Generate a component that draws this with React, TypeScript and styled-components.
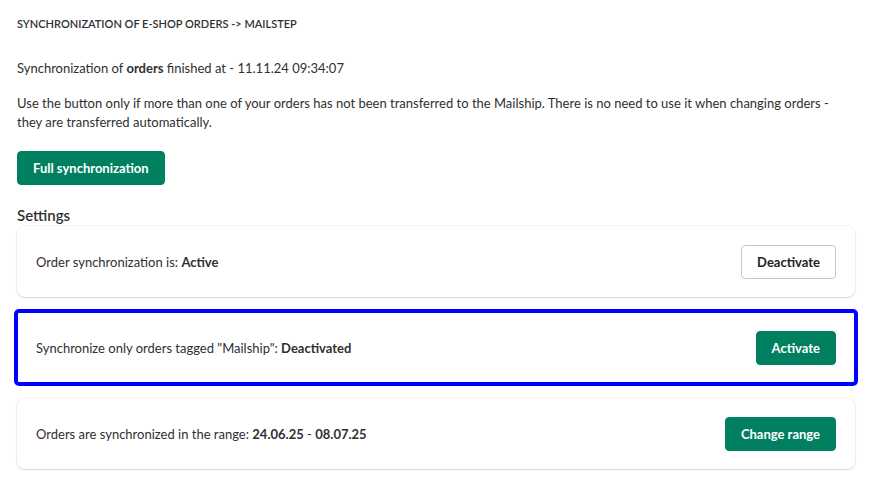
import React from "react";
import styled, {createGlobalStyle} from "styled-components";

const GlobalStyle = createGlobalStyle`
    body {
        margin: 0;
        background: #ffffff;
        color: #303030;
        font-family: Lato, "Open Sans", sans-serif;
        font-size: 13px;
    }
`;

const StyledPage = styled.main`
    display: flex;
    flex-direction: column;
    padding: 16px 15px 12px 17px;
`;

const StyledTitle = styled.h1`
    font-size: 11px;
    font-weight: 600;
    line-height: 16px;
    margin: 0 0 27px;
    text-transform: uppercase;
`;

const StyledText = styled.p`
    line-height: 19px;
    margin: 0 0 16px;

    &:last-of-type {
        margin-bottom: 19px;
    }
`;

const StyledHeading = styled.h2`
    font-size: 15px;
    font-weight: 600;
    line-height: 20px;
    margin: 0 0 1px;
`;

const StyledCards = styled.div`
    display: flex;
    flex-direction: column;
    gap: 15px;
`;

const StyledCard = styled.section<{$highlight?: boolean}>`
    align-items: center;
    background: #ffffff;
    border-radius: ${(p) => (p.$highlight ? "2px" : "8px")};
    box-shadow: 0 1px 2px rgba(0, 0, 0, 0.14), 0 0 0 1px rgba(0, 0, 0, 0.04);
    box-sizing: border-box;
    display: flex;
    height: 71px;
    justify-content: space-between;
    outline: ${(p) => (p.$highlight ? "4px solid #0000ff" : "none")};
    outline-offset: -1px;
    padding: 0 19px;
`;

const StyledButton = styled.button<{$secondary?: boolean}>`
    background: ${(p) => (p.$secondary ? "#ffffff" : "#008060")};
    border: 1px solid ${(p) => (p.$secondary ? "#c4c7ca" : "#008060")};
    border-radius: 4px;
    color: ${(p) => (p.$secondary ? "#202223" : "#ffffff")};
    cursor: pointer;
    font-family: inherit;
    font-size: 13px;
    font-weight: 700;
    height: 34px;
    padding: 0 15px;
`;

const StyledTopButton = styled(StyledButton)`
    align-self: flex-start;
    margin-bottom: 20px;
`;

const settings = [
    {
        label: "Order synchronization is: ",
        value: <b>Active</b>,
        action: "Deactivate",
        secondary: true,
    },
    {
        label: "Synchronize only orders tagged \"Mailship\": ",
        value: <b>Deactivated</b>,
        action: "Activate",
        highlight: true,
    },
    {
        label: "Orders are synchronized in the range: ",
        value: (
            <>
                <b>24.06.25</b> - <b>08.07.25</b>
            </>
        ),
        action: "Change range",
    },
];

export default function App() {
    return (
        <StyledPage>
            <GlobalStyle />
            <StyledTitle>Synchronization of e-shop orders -&gt; Mailstep</StyledTitle>
            <StyledText>
                Synchronization of <b>orders</b> finished at - 11.11.24 09:34:07
            </StyledText>
            <StyledText>
                Use the button only if more than one of your orders has not been transferred to the
                Mailship. There is no need to use it when changing orders - they are transferred
                automatically.
            </StyledText>
            <StyledTopButton>Full synchronization</StyledTopButton>
            <StyledHeading>Settings</StyledHeading>
            <StyledCards>
                {settings.map((s) => (
                    <StyledCard key={s.action} $highlight={s.highlight}>
                        <span>
                            {s.label}
                            {s.value}
                        </span>
                        <StyledButton $secondary={s.secondary}>{s.action}</StyledButton>
                    </StyledCard>
                ))}
            </StyledCards>
        </StyledPage>
    );
}
